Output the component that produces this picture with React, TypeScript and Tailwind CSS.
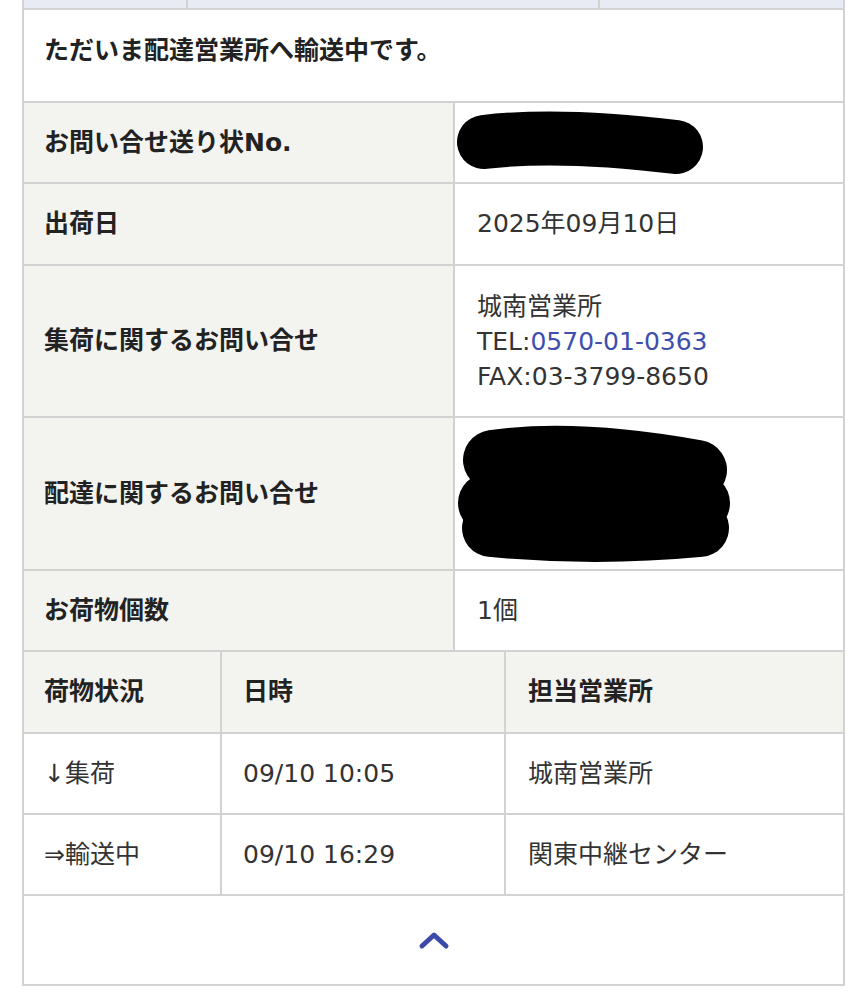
const font = { fontFamily: '"DejaVu Sans", "Noto Sans CJK JP", sans-serif' };

type InfoRow = {
  label: string;
  h: string;
  value: React.ReactNode;
};

const NoBlob = () => (
  <svg width="388" height="79" viewBox="0 0 388 79" className="block">
    <path d="M29 39 Q105 30 221 44" stroke="#000" strokeWidth="54" strokeLinecap="round" fill="none" />
  </svg>
);

const AddrBlob = () => (
  <svg width="388" height="151" viewBox="0 0 388 151" className="block">
    <g stroke="#000" strokeLinecap="round" fill="none">
      <path d="M38 42 Q120 30 242 52" strokeWidth="60" />
      <path d="M33 85 L245 85" strokeWidth="60" />
      <path d="M36 110 Q140 120 245 110" strokeWidth="58" />
    </g>
  </svg>
);

const rows: InfoRow[] = [
  { label: "お問い合せ送り状No.", h: "h-[79px]", value: <NoBlob /> },
  {
    label: "出荷日",
    h: "h-[80px]",
    value: <span className="pl-[22px]">2025年09月10日</span>,
  },
  {
    label: "集荷に関するお問い合せ",
    h: "h-[150px]",
    value: (
      <div className="pl-[22px] leading-[35px]">
        <div>城南営業所</div>
        <div>
          TEL:<a className="text-[#3e4fb0]">0570-01-0363</a>
        </div>
        <div>FAX:03-3799-8650</div>
      </div>
    ),
  },
  { label: "配達に関するお問い合せ", h: "h-[151px]", value: <AddrBlob /> },
  {
    label: "お荷物個数",
    h: "h-[79px]",
    value: <span className="pl-[22px]">1個</span>,
  },
];

const history = [
  ["↓集荷", "09/10 10:05", "城南営業所"],
  ["⇒輸送中", "09/10 16:29", "関東中継センター"],
];

export default function App() {
  return (
    <div className="w-[867px] h-[999px] bg-white overflow-hidden text-[25px] text-[#333]" style={font}>
      <div className="ml-[22px] w-[823px] border-x-2 border-b-2 border-[#d2d2d2]">
        {/* tabs row cut off at the top */}
        <div className="flex h-[10px] border-b-2 border-[#d2d2d2] bg-[#e8ebf4]">
          <div className="w-[164px] border-r-2 border-[#d2d2d2]" />
          <div className="w-[412px] border-r-2 border-[#d2d2d2]" />
          <div className="flex-1" />
        </div>

        <div className="h-[93px] flex items-center border-b-2 border-[#d2d2d2] pl-[20px] font-bold text-[#222] pb-[10px]">
          ただいま配達営業所へ輸送中です。
        </div>

        {rows.map((r) => (
          <div key={r.label} className="flex border-b-2 border-[#d2d2d2]">
            <div
              className={`${r.h} w-[431px] shrink-0 flex items-center pl-[20px] bg-[#f3f3f0] border-r-2 border-[#d2d2d2] font-bold text-[#222]`}
            >
              {r.label}
            </div>
            <div className={`${r.h} flex-1 flex items-center`}>{r.value}</div>
          </div>
        ))}

        <div className="flex h-[82px] border-b-2 border-[#d2d2d2] bg-[#f3f3f0] font-bold text-[#222]">
          <div className="w-[198px] shrink-0 flex items-center pl-[20px] border-r-2 border-[#d2d2d2]">荷物状況</div>
          <div className="w-[284px] shrink-0 flex items-center pl-[21px] border-r-2 border-[#d2d2d2]">日時</div>
          <div className="flex-1 flex items-center pl-[22px]">担当営業所</div>
        </div>

        {history.map(([s, t, o]) => (
          <div key={t} className="flex h-[81px] border-b-2 border-[#d2d2d2]">
            <div className="w-[198px] shrink-0 flex items-center pl-[20px] border-r-2 border-[#d2d2d2]">{s}</div>
            <div className="w-[284px] shrink-0 flex items-center pl-[21px] border-r-2 border-[#d2d2d2]">{t}</div>
            <div className="flex-1 flex items-center pl-[22px]">{o}</div>
          </div>
        ))}

        <div className="h-[88px] flex items-center justify-center">
          <svg width="32" height="20" viewBox="0 0 32 20">
            <polyline
              points="4,16 16,5 28,16"
              fill="none"
              stroke="#3b4aa8"
              strokeWidth="5"
              strokeLinecap="round"
              strokeLinejoin="round"
            />
          </svg>
        </div>
      </div>
    </div>
  );
}
